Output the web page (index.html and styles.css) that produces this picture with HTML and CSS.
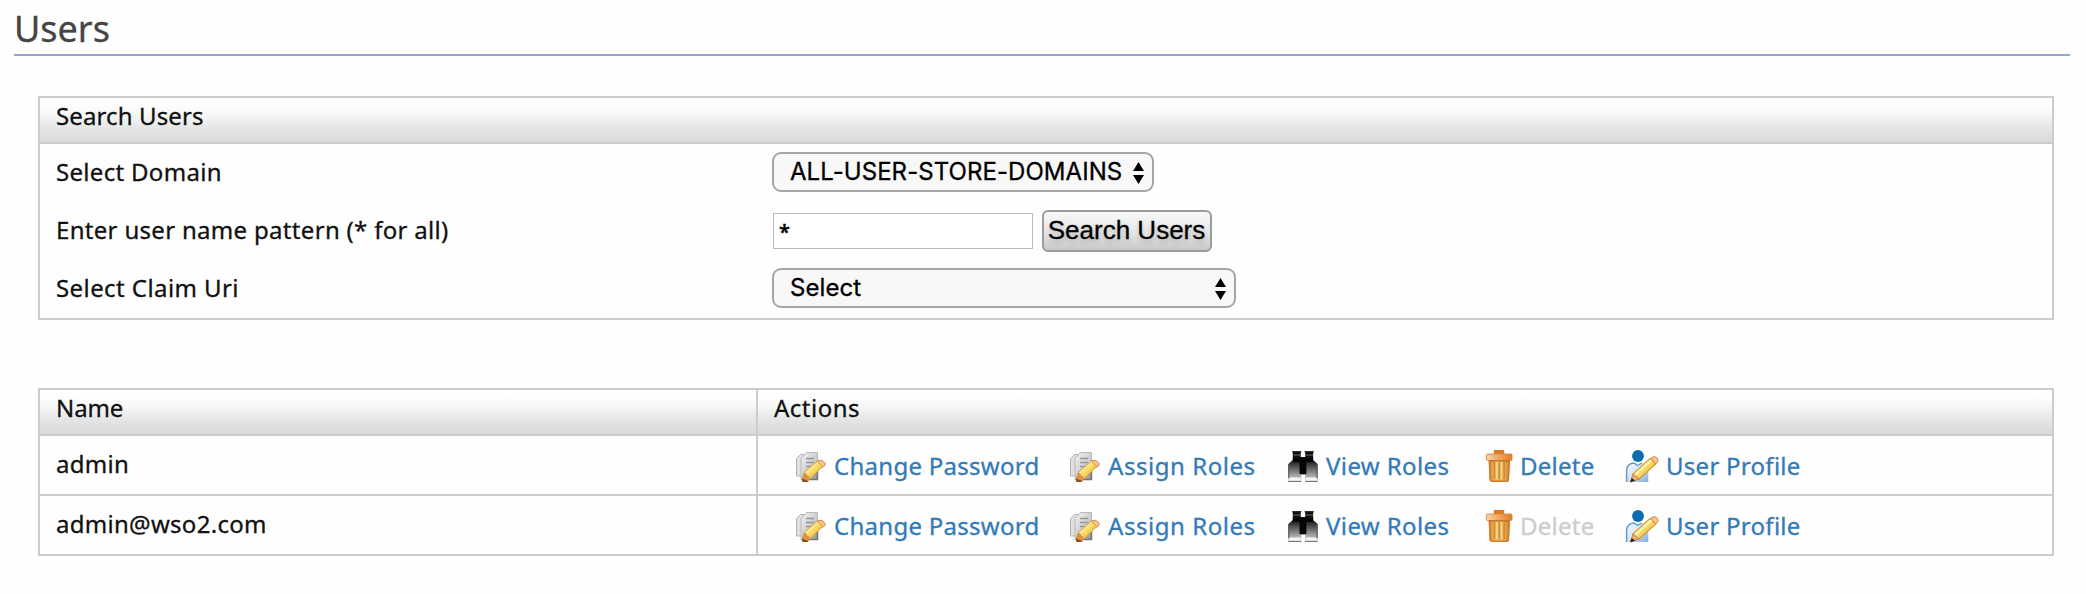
FILE: index.html
```html
<!DOCTYPE html>
<html lang="en">
<head>
<meta charset="utf-8">
<title>Users</title>
<link rel="stylesheet" href="styles.css">
</head>
<body>
<svg class="sprite" width="0" height="0" aria-hidden="true">
  <defs>
    <linearGradient id="g-paper" x1="0" y1="0" x2="1" y2="1"><stop offset="0" stop-color="#f4f4f4"/><stop offset=".6" stop-color="#c9cacd"/><stop offset="1" stop-color="#8e8e90"/></linearGradient>
    <linearGradient id="g-pencil" x1="0" y1="0" x2="1" y2="1"><stop offset=".3" stop-color="#fff3a8"/><stop offset=".6" stop-color="#f3cf4c"/><stop offset="1" stop-color="#dba32e"/></linearGradient>
    <linearGradient id="g-bino" x1="0" y1="0" x2="0" y2="1"><stop offset=".1" stop-color="#050505"/><stop offset=".35" stop-color="#2a2a2a"/><stop offset=".8" stop-color="#aaa"/><stop offset="1" stop-color="#d8d8d8"/></linearGradient>
    <linearGradient id="g-lid" x1="0" y1="0" x2="1" y2="0"><stop offset="0" stop-color="#fbd3ad"/><stop offset=".35" stop-color="#f4b173"/><stop offset="1" stop-color="#e07e26"/></linearGradient>
    <linearGradient id="g-bin" x1="0" y1="0" x2="1" y2="0"><stop offset="0" stop-color="#dc8934"/><stop offset=".4" stop-color="#f2c46b"/><stop offset=".75" stop-color="#e0a951"/><stop offset="1" stop-color="#d8802f"/></linearGradient>
    <linearGradient id="g-body" x1="0" y1="0" x2="1" y2="1"><stop offset="0" stop-color="#f5faff"/><stop offset=".5" stop-color="#d5e4f5"/><stop offset="1" stop-color="#7fa9de"/></linearGradient>
  </defs>
  <symbol id="i-edit" viewBox="0 0 32 32" overflow="visible">
    <path d="M2.500 8.500 6.500 4.500H10V26H2.500Z" fill="#e0e0e1" stroke="#b5b5b7"/>
    <path d="M7 8.500 12.500 2.500H23.500V29.500H7Z" fill="url(#g-paper)" stroke="#b9b9bb"/>
    <path d="M23.500 18V29.500H14" fill="none" stroke="#77777a" stroke-width="1.500"/>
    <path d="M12 8.500H20M12 12.500H20M12 16.500H17" stroke="#96979b" stroke-width="1.700"/>
    <path d="M24 10.500 28 10.300 31.200 13.500 30.500 16 26 18.500Z" fill="#f5c492" stroke="#d58b46"/>
    <path d="M10 22.500 23.500 11 28.500 16.500 16 29Z" fill="url(#g-pencil)" stroke="#dc9a43"/>
    <path d="M10 22.500C12 23 13 24 13 25.500 15 26 16 27 16 29L14 32H8.500L7.500 29Z" fill="#d89348"/>
    <path d="M8 28.500 14 31 13.500 32H8.500Z" fill="#815021"/>
  </symbol>
  <symbol id="i-bino" viewBox="0 0 32 32" overflow="visible">
    <g transform="matrix(1.13 0 0 1 -4.500 0)">
      <path d="M10 2H17V7H21V2H28V10L32 14V32H21V25H17.500V32H6V14L10 10Z" fill="url(#g-bino)"/>
      <path d="M9.500 1.800H17.500M20.500 1.800H28.500" stroke="#2b2b2b" stroke-width="1.500"/>
      <path d="M10.500 5H17M21 5H28" stroke="#777" stroke-width="1"/>
      <path d="M10 8H28V12H22V24H16V12H10Z" fill="#050505"/>
      <path d="M7 27.500H17V30.500H7ZM21.500 27.500H31V30.500H21.500Z" fill="#f5f5f5"/>
      <path d="M6.500 14V28M31.500 14V28" stroke="#555" stroke-width="1"/>
      <path d="M6 31.500H17.500M21 31.500H32" stroke="#777"/>
    </g>
  </symbol>
  <symbol id="i-trash" viewBox="0 0 32 32" overflow="visible">
    <g transform="matrix(1.15 0 0 1 -5.700 0)">
      <path d="M17 0H26V5H17Z" fill="#d97a22"/>
      <path d="M12.500 10H31L30 30Q30 32 28 32H15.500Q13.500 32 13.300 30Z" fill="url(#g-bin)"/>
      <path d="M13.200 11 14 30Q14.500 31.300 16 31.300H28Q29.400 31.300 29.500 30L30.300 11" fill="none" stroke="#d47a2a" stroke-width="1.500"/>
      <path d="M17.500 12V29M21.700 12V29M26 12V29" stroke="#d08a32" stroke-width="1.300"/>
      <path d="M19.500 12V29M23.700 12V29" stroke="#f7d88c" stroke-width="1.200"/>
      <rect x="10.500" y="4" width="22.300" height="6.500" rx="1" fill="url(#g-lid)" stroke="#d9883d" stroke-width=".8"/>
      <path d="M13 11H30.500" stroke="#b8651e" stroke-width="1"/>
    </g>
  </symbol>
  <symbol id="i-user" viewBox="0 0 32 32" overflow="visible">
    <g transform="matrix(1.14 0 0 1 -6.800 0)">
      <path d="M6.500 32V20Q7 13.500 13 13L16.500 16 20 13Q25.500 14 25.500 20V32Z" fill="url(#g-body)"/>
      <path d="M6.500 32V20Q7 13.500 13 13L16 15.500 20 13" fill="none" stroke="#5d9acb" stroke-width="1.300"/>
      <ellipse cx="16.500" cy="6" rx="5.200" ry="6" fill="#0d6cb0"/>
      <path d="M28 8.500 30.500 6.500Q34.500 8 34 11.500L31.500 14.500Z" fill="#f7c69a" stroke="#e0934f"/>
      <path d="M12 24 27 8.500 32 14 17.500 29Z" fill="url(#g-pencil)" stroke="#cf8f39"/>
      <path d="M13.500 25.500 28.500 10" stroke="#fff7c9" stroke-width="1.200"/>
      <path d="M12 24 17.500 29 10 32Z" fill="#eab27a" stroke="#c27a3c" stroke-width=".8"/>
      <path d="M11 28 14 30.700 9.500 32.300Z" fill="#2b2118"/>
    </g>
  </symbol>
</svg>

<main class="page">
  <h1 class="page-title">Users</h1>

  <section class="panel search">
    <header class="bar">Search Users</header>
    <div class="form">
      <span class="label">Select Domain</span>
      <div class="select select-domain"><span>ALL-USER-STORE-DOMAINS</span>
        <svg class="arrows" viewBox="0 0 11 22"><path d="M5.500 0 11 9H0ZM0 13H11L5.500 22Z"/></svg></div>
      <span class="label">Enter user name pattern (* for all)</span>
      <div class="field">
        <div class="input">*</div>
        <div class="button"><span>Search Users</span></div>
      </div>
      <span class="label claim">Select Claim Uri</span>
      <div class="select select-claim"><span>Select</span>
        <svg class="arrows" viewBox="0 0 11 22"><path d="M5.500 0 11 9H0ZM0 13H11L5.500 22Z"/></svg></div>
    </div>
  </section>

  <section class="panel users">
    <div class="row head bar"><div class="name">Name</div><div class="cell">Actions</div></div>
    <div class="row">
      <div class="name">admin</div>
      <div class="cell actions">
        <a class="action"><svg><use href="#i-edit"/></svg><span>Change Password</span></a>
        <a class="action assign"><svg><use href="#i-edit"/></svg><span>Assign Roles</span></a>
        <a class="action view"><svg><use href="#i-bino"/></svg><span>View Roles</span></a>
        <a class="action"><svg><use href="#i-trash"/></svg><span>Delete</span></a>
        <a class="action"><svg><use href="#i-user"/></svg><span>User Profile</span></a>
      </div>
    </div>
    <div class="row last">
      <div class="name">admin@wso2.com</div>
      <div class="cell actions">
        <a class="action"><svg><use href="#i-edit"/></svg><span>Change Password</span></a>
        <a class="action assign"><svg><use href="#i-edit"/></svg><span>Assign Roles</span></a>
        <a class="action view"><svg><use href="#i-bino"/></svg><span>View Roles</span></a>
        <a class="action disabled"><svg><use href="#i-trash"/></svg><span>Delete</span></a>
        <a class="action"><svg><use href="#i-user"/></svg><span>User Profile</span></a>
      </div>
    </div>
  </section>
</main>
</body>
</html>
```
FILE: styles.css
```css
* { box-sizing: border-box; }
body {
  margin: 0;
  background: #fefefe;
  color: #111;
  font: 24px/32px "Noto Sans", "Open Sans", sans-serif;
  white-space: nowrap;
  -webkit-text-stroke: .3px currentColor;
}
.sprite { display: block; height: 0; }
.page { padding: 0 16px 0 14px; }
.page-title {
  margin: 0;
  height: 56px;
  padding: 5px 0 0 0;
  border-bottom: 2px solid #95a8cc;
  color: #444;
  font-size: 36px;
  font-weight: 400;
  line-height: 48px;
}
.panel {
  margin: 40px 16px 0 24px;
  border: 2px solid #ccc;
}
.bar {
  height: 46px;
  border-bottom: 2px solid #ccc;
  background: linear-gradient(#fff 0%, #fdfdfd 18%, #f2f4f3 45%, #e2e4e5 70%, #d9dbdc 95%);
}
.search { height: 224px; }
.search .bar { padding: 2px 16px; letter-spacing: .12px; }
.form {
  display: grid;
  grid-template-columns: 716px auto;
  grid-template-rows: 58px 58px 58px;
  padding: 0 0 0 16px;
  align-items: center;
  justify-content: start;
}
.label { margin-top: -2px; letter-spacing: .31px; }
.claim { letter-spacing: .42px; }
.select {
  display: flex;
  align-items: center;
  justify-content: space-between;
  height: 40px;
  border: 2px solid #a5a5a5;
  border-radius: 9px;
  background: #f8f8f8;
  color: #000;
  padding: 0 8px 0 16px;
  font-family: Inter, sans-serif;
  letter-spacing: .06px;
  margin-top: -2px;
}
.select-domain { width: 382px; }
.select-claim { width: 464px; }
.arrows { width: 11px; height: 22px; margin-top: 2px; }
.field { display: flex; align-items: center; height: 42px; margin-bottom: 0; }
.input {
  width: 260px;
  height: 36px;
  margin: 0 9px 0 1px;
  padding: 0 5px;
  border: 1px solid #bbb;
  background: #fff;
  color: #000;
  font-size: 20px;
  font-weight: 600;
  line-height: 35px;
}
.button {
  width: 170px;
  height: 42px;
  border: 2px solid #9c9c9c;
  border-radius: 6px;
  background: linear-gradient(#f8f8f8, #e6e6e6 55%, #c8c8c8);
  color: #000;
  font: 26px/37px "Liberation Sans", Arial, sans-serif;
  text-align: center;
  text-shadow: 0 3px 5px rgba(0, 0, 0, .2);
}
.button span { margin-left: -1px; }
.users { margin-top: 68px; height: 168px; }
.row {
  display: grid;
  grid-template-columns: 718px 1fr;
  height: 58px;
}
.row.last { height: 60px; border-top: 2px solid #ccc; }
.row.head { height: 46px; }
.name { padding: 12px 16px 0; border-right: 2px solid #ccc; letter-spacing: .28px; }
.head .name { letter-spacing: -.1px; }
.head .name, .head .cell { padding-top: 2px; }
.cell { padding-left: 16px; letter-spacing: .5px; }
.actions {
  display: grid;
  grid-template-columns: 274px 218px 194px 146px auto;
  justify-content: start;
  padding: 14px 0 0 36px;
  letter-spacing: .27px;
}
.action { display: flex; gap: 8px; height: 32px; color: #337ab7; }
.action svg { width: 32px; height: 32px; overflow: visible; }
.assign { letter-spacing: .55px; }
.view { letter-spacing: .4px; }
.disabled span { color: #ccc; }
```
